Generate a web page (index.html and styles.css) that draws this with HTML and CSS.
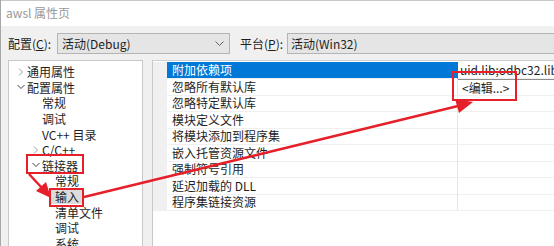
FILE: index.html
```html
<!DOCTYPE html>
<html lang="zh-CN">
<head>
    <meta charset="UTF-8">
    <title>awsl 属性页</title>
    <link rel="stylesheet" href="styles.css">
</head>
<body>
    <div class="dialog">
        <div class="titlebar">awsl 属性页</div>

        <div class="toolbar">
            <span class="label label-config">配置(<u>C</u>):</span>
            <div class="combo combo-config">
                <span>活动(Debug)</span>
                <svg class="combo-arrow" width="9" height="6" viewBox="0 0 9 6">
                    <path d="M0.5 0.5 L4.5 4.5 L8.5 0.5" fill="none" stroke="#606060" stroke-width="1"/>
                </svg>
            </div>
            <span class="label label-platform">平台(<u>P</u>):</span>
            <div class="combo combo-platform">
                <span>活动(Win32)</span>
            </div>
        </div>

        <div class="panes">
            <div class="tree">
                <div class="node lvl1"><svg class="chev" width="6" height="8" viewBox="0 0 6 8"><path d="M1 0.5 L4.5 4 L1 7.5" fill="none" stroke="#a0a0a0"/></svg>通用属性</div>
                <div class="node lvl1"><svg class="chev" width="8" height="6" viewBox="0 0 8 6"><path d="M0.5 1 L4 4.5 L7.5 1" fill="none" stroke="#404040"/></svg>配置属性</div>
                <div class="node lvl2">常规</div>
                <div class="node lvl2">调试</div>
                <div class="node lvl2">VC++ 目录</div>
                <div class="node lvl2"><svg class="chev" width="6" height="8" viewBox="0 0 6 8"><path d="M1 0.5 L4.5 4 L1 7.5" fill="none" stroke="#a0a0a0"/></svg>C/C++</div>
                <div class="node lvl2"><svg class="chev" width="8" height="6" viewBox="0 0 8 6"><path d="M0.5 1 L4 4.5 L7.5 1" fill="none" stroke="#404040"/></svg>链接器</div>
                <div class="node lvl3">常规</div>
                <div class="node lvl3"><span class="selected">输入</span></div>
                <div class="node lvl3">清单文件</div>
                <div class="node lvl3">调试</div>
                <div class="node lvl3">系统</div>
            </div>

            <div class="grid">
                <div class="row active">
                    <div class="strip"></div>
                    <div class="name">附加依赖项</div>
                    <div class="value">uid.lib;odbc32.lib;odbccp32.lib</div>
                </div>
                <div class="row">
                    <div class="strip"></div>
                    <div class="name">忽略所有默认库</div>
                    <div class="value"><div class="editor">&lt;编辑...&gt;</div></div>
                </div>
                <div class="row">
                    <div class="strip"></div>
                    <div class="name">忽略特定默认库</div>
                    <div class="value"></div>
                </div>
                <div class="row">
                    <div class="strip"></div>
                    <div class="name">模块定义文件</div>
                    <div class="value"></div>
                </div>
                <div class="row">
                    <div class="strip"></div>
                    <div class="name">将模块添加到程序集</div>
                    <div class="value"></div>
                </div>
                <div class="row">
                    <div class="strip"></div>
                    <div class="name">嵌入托管资源文件</div>
                    <div class="value"></div>
                </div>
                <div class="row">
                    <div class="strip"></div>
                    <div class="name">强制符号引用</div>
                    <div class="value"></div>
                </div>
                <div class="row">
                    <div class="strip"></div>
                    <div class="name">延迟加载的 DLL</div>
                    <div class="value"></div>
                </div>
                <div class="row">
                    <div class="strip"></div>
                    <div class="name">程序集链接资源</div>
                    <div class="value"></div>
                </div>
            </div>
        </div>

        <!-- red annotations drawn over the dialog -->
        <svg class="marks" width="554" height="246" viewBox="0 0 554 246">
            <rect x="27" y="155" width="56" height="18" fill="none" stroke="#e5202a" stroke-width="2"/>
            <rect x="50" y="189" width="33" height="17" fill="none" stroke="#e5202a" stroke-width="2"/>
            <rect x="453" y="72" width="63" height="28" fill="none" stroke="#e5202a" stroke-width="2"/>

            <line x1="29" y1="174" x2="42" y2="188" stroke="#e5202a" stroke-width="2.5"/>
            <polygon points="51,198 36,191 46,182" fill="#e5202a"/>

            <line x1="84" y1="197" x2="458" y2="106" stroke="#e5202a" stroke-width="2.5"/>
            <polygon points="473,102 459,113 455,99" fill="#e5202a"/>
        </svg>
    </div>
</body>
</html>
```

FILE: styles.css
```css
body {
    margin: 0;
    font-family: "Microsoft YaHei", "Noto Sans CJK SC", sans-serif;
    font-size: 12px;
    color: #1e1e1e;
    background-color: #f0f0f0;
}

.dialog {
    position: relative;
    width: 554px;
    height: 246px;
    overflow: hidden;
    border-left: 1px solid #a8a8a8;
    box-sizing: border-box;
}

.titlebar {
    height: 26px;
    line-height: 24px;
    padding-left: 5px;
    background-color: #fff;
    border-top: 1px solid #c8c8c8;
    box-sizing: border-box;
    color: #999;
}

.toolbar {
    display: flex;
    align-items: center;
    margin-top: 7px;
    padding-left: 7px;
    height: 21px;
}

.label {
    line-height: 21px;
}

.label-config {
    width: 49px;
}

.label-platform {
    width: 47px;
    margin-left: 10px;
}

.combo {
    display: flex;
    align-items: center;
    justify-content: space-between;
    height: 21px;
    padding: 0 4px 0 4px;
    background-color: #e5e5e5;
    border: 1px solid #b4b4b4;
    box-sizing: border-box;
}

.combo-config {
    width: 173px;
}

.combo-platform {
    flex: 1;
    margin-right: -10px;
    padding-left: 3px;
}

.combo-arrow {
    margin-right: 1px;
}

.panes {
    display: flex;
    margin-top: 6px;
    padding-left: 7px;
    height: 200px;
}

.tree {
    width: 135px;
    background-color: #fff;
    border: 1px solid #c8c8c8;
    border-bottom: none;
    box-sizing: border-box;
    padding-top: 3px;
}

.node {
    display: flex;
    align-items: center;
    height: 15.6px;
    line-height: 15px;
    white-space: nowrap;
}

.node.lvl1 { padding-left: 18px; }
.node.lvl2 { padding-left: 33px; }
.node.lvl3 { padding-left: 46px; }

.chev {
    margin-left: -10px;
    margin-right: 2px;
    width: 8px;
}

.selected {
    background-color: #dcdcdc;
    padding: 0 4px;
    margin-left: -4px;
    line-height: 15px;
}

.grid {
    flex: 1;
    margin-left: 9px;
    margin-right: -4px;
    background-color: #fff;
    border-left: 1px solid #c8c8c8;
    border-top: 1px solid #d0d0d0;
    padding-top: 1px;
}

.row {
    display: grid;
    grid-template-columns: 14px 291px 1fr;
    height: 16.5px;
    line-height: 16px;
    white-space: nowrap;
}

.strip {
    background-color: #f0f0f0;
}

.name {
    padding-left: 5px;
    border-bottom: 1px solid #f0f0f0;
    border-right: 1px solid #e6e6e6;
}

.value {
    padding-left: 2px;
    border-bottom: 1px solid #f0f0f0;
    overflow: hidden;
}

.row.active .name {
    background-color: #0078d7;
    color: #fff;
    border-right-color: #0078d7;
}

.editor {
    margin-left: -4px;
    height: 17px;
    padding-left: 5px;
    border: 1px solid #8c8c8c;
    border-right: none;
    box-sizing: border-box;
    line-height: 15px;
    background-color: #fff;
}

.marks {
    position: absolute;
    left: -1px;
    top: 0;
    pointer-events: none;
}
```
